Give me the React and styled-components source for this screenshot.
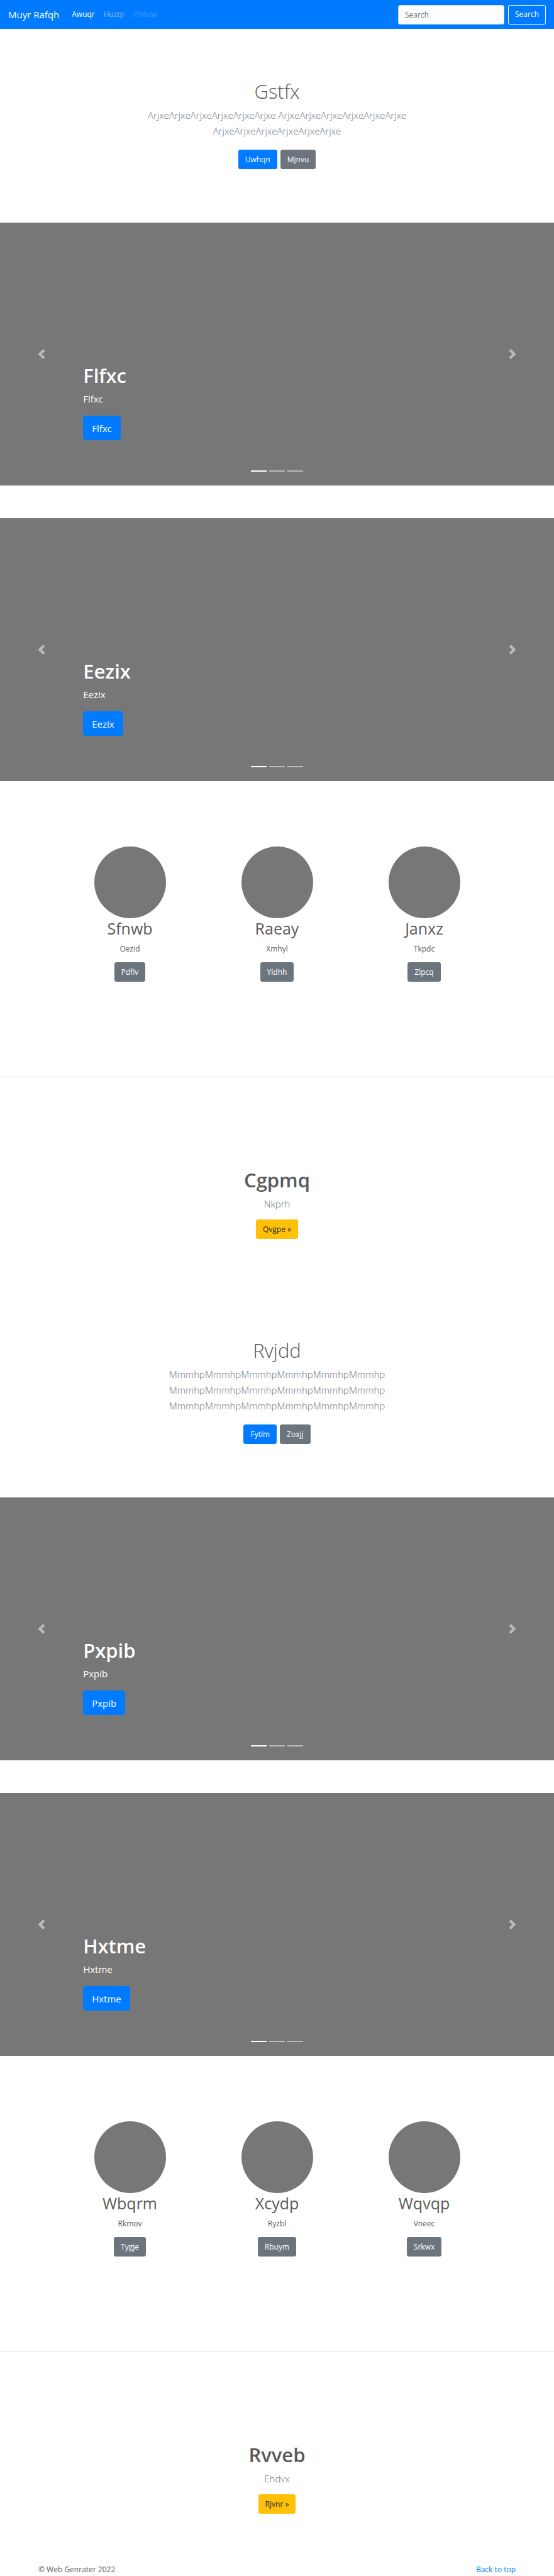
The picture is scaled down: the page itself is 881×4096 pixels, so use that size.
import React from "react";
import styled, { createGlobalStyle } from "styled-components";

const GlobalStyle = createGlobalStyle`
  *, *::before, *::after { box-sizing: border-box; }
  body {
    margin: 0;
    background: #fff;
    color: #5a5a5a;
    font-family: "Open Sans", "Noto Sans", sans-serif;
    font-size: 12px;
    line-height: 20px;
  }
  h1, h2, p { margin: 0; }
`;

const Navbar = styled.nav`
  display: flex;
  align-items: center;
  min-height: 46px;
  padding: 0 13px;
  background: #007bff;
`;

const Brand = styled.a`
  margin-right: 20px;
  color: #fff;
  font-size: 15px;
  line-height: 24px;
  text-decoration: none;
`;

const NavList = styled.ul`
  display: flex;
  flex: 1;
  gap: 14px;
  margin: 0;
  padding: 0;
  list-style: none;
`;

const navColors = {
  active: "#fff",
  normal: "rgba(255, 255, 255, 0.5)",
  disabled: "rgba(255, 255, 255, 0.25)",
};

const NavLink = styled.a`
  color: ${(p) => navColors[p.$state]};
  text-decoration: none;
`;

const SearchForm = styled.form`
  display: flex;
  gap: 6px;
`;

const SearchInput = styled.input`
  width: 169px;
  height: 31px;
  padding: 0 10px;
  border: 1px solid #ced4da;
  border-radius: 3px;
  background: #fff;
  color: #495057;
  font: inherit;
  &::placeholder { color: #6c757d; opacity: 1; }
`;

const tones = {
  primary: ["#007bff", "#fff", "#007bff"],
  secondary: ["#6c757d", "#fff", "#6c757d"],
  warning: ["#ffc107", "#212529", "#ffc107"],
  outline: ["transparent", "#fff", "#f8f9fa"],
};

const Button = styled.button`
  display: inline-flex;
  align-items: center;
  justify-content: center;
  height: ${(p) => (p.$large ? 39 : 31)}px;
  padding: 0 ${(p) => (p.$large ? 13 : 10)}px;
  border: 1px solid ${(p) => tones[p.$tone][2]};
  border-radius: ${(p) => (p.$large ? 4 : 3)}px;
  background: ${(p) => tones[p.$tone][0]};
  color: ${(p) => tones[p.$tone][1]};
  font-family: inherit;
  font-size: ${(p) => (p.$large ? 15 : 12)}px;
  line-height: 20px;
  cursor: pointer;
`;

const HeroSection = styled.section`
  display: flex;
  flex-direction: column;
  align-items: center;
  padding: 80px 24px 85px;
  text-align: center;
`;

const Title = styled.h1`
  font-size: 31px;
  font-weight: ${(p) => (p.$light ? 300 : 600)};
  line-height: 39px;
`;

const Lead = styled.p`
  max-width: 440px;
  margin-top: 6px;
  color: #6c757d;
  font-size: 15px;
  font-weight: 300;
  line-height: 25px;
`;

const ButtonRow = styled.div`
  display: flex;
  gap: 5px;
  margin-top: 17px;
`;

const Carousels = styled.div`
  display: grid;
  gap: 52px;
`;

const Slide = styled.section`
  position: relative;
  display: flex;
  flex-direction: column;
  justify-content: flex-end;
  align-items: flex-start;
  min-height: 418px;
  padding: 0 15% 72px;
  background: #777;
  color: #fff;
`;

const SlideText = styled.p`
  margin: 5px 0 15px;
  font-size: 15px;
  line-height: 24px;
`;

const SlideControl = styled.button`
  position: absolute;
  top: 0;
  bottom: 0;
  ${(p) => p.$side}: 0;
  display: flex;
  align-items: center;
  justify-content: center;
  width: 15%;
  padding: 0;
  border: 0;
  background: none;
  opacity: 0.5;
  cursor: pointer;
`;

const Indicators = styled.div`
  position: absolute;
  right: 0;
  bottom: 22px;
  left: 0;
  display: flex;
  justify-content: center;
  gap: 4px;
`;

const Indicator = styled.button`
  width: 25px;
  height: 2px;
  padding: 0;
  border: 0;
  background: #fff;
  opacity: ${(p) => (p.$active ? 1 : 0.5)};
`;

const Columns = styled.section`
  display: grid;
  grid-template-columns: repeat(3, 1fr);
  max-width: 702px;
  margin: 0 auto;
  padding: 104px 0 151px;
`;

const Column = styled.article`
  display: flex;
  flex-direction: column;
  align-items: center;
`;

const Avatar = styled.div`
  width: 114px;
  height: 114px;
  border-radius: 50%;
  background: #777;
`;

const ColumnTitle = styled.h2`
  font-size: 25px;
  font-weight: 400;
  line-height: 33px;
`;

const ColumnText = styled.p`
  margin: 6px 0 11px;
`;

const Divider = styled.hr`
  height: 1px;
  margin: 0;
  border: 0;
  background: #e5e5e5;
`;

const BannerSection = styled.section`
  display: flex;
  flex-direction: column;
  align-items: center;
  padding: 144px 24px 78px;
`;

const BannerAction = styled.div`
  display: flex;
  margin-top: 12px;
`;

const Footer = styled.footer`
  display: flex;
  justify-content: space-between;
  padding: 0 61px;
  line-height: 21px;
`;

const FooterLink = styled.a`
  color: #007bff;
  text-decoration: none;
`;

const Hero = ({ title, text, primary, secondary }) => (
  <HeroSection>
    <Title $light>{title}</Title>
    <Lead>{text}</Lead>
    <ButtonRow>
      <Button $tone="primary">{primary}</Button>
      <Button $tone="secondary">{secondary}</Button>
    </ButtonRow>
  </HeroSection>
);

const Carousel = ({ name }) => (
  <Slide>
    <Title>{name}</Title>
    <SlideText>{name}</SlideText>
    <Button $tone="primary" $large>{name}</Button>
    <SlideControl $side="left" aria-label="Previous">
      <svg width="16" height="16" viewBox="0 0 8 8" fill="#fff">
        <path d="M5.25 0l-4 4 4 4 1.5-1.5L4.25 4l2.5-2.5L5.25 0z" />
      </svg>
    </SlideControl>
    <SlideControl $side="right" aria-label="Next">
      <svg width="16" height="16" viewBox="0 0 8 8" fill="#fff">
        <path d="M2.75 0l-1.5 1.5L3.75 4l-2.5 2.5L2.75 8l4-4-4-4z" />
      </svg>
    </SlideControl>
    <Indicators>
      {[0, 1, 2].map((i) => (
        <Indicator key={i} $active={i === 0} aria-label={`Slide ${i + 1}`} />
      ))}
    </Indicators>
  </Slide>
);

const Features = ({ items }) => (
  <Columns>
    {items.map(([title, text, action]) => (
      <Column key={title}>
        <Avatar />
        <ColumnTitle>{title}</ColumnTitle>
        <ColumnText>{text}</ColumnText>
        <Button $tone="secondary">{action}</Button>
      </Column>
    ))}
  </Columns>
);

const Banner = ({ title, text, action }) => (
  <BannerSection>
    <Title>{title}</Title>
    <Lead>{text}</Lead>
    <BannerAction>
      <Button $tone="warning">{action} »</Button>
    </BannerAction>
  </BannerSection>
);

const arjxe = "Arjxe".repeat(6);
const mmmhp = "Mmmhp".repeat(6);

export default function App() {
  return (
    <>
      <GlobalStyle />
      <Navbar>
        <Brand href="#">Muyr Rafqh</Brand>
        <NavList>
          <li><NavLink href="#" $state="active">Awuqr</NavLink></li>
          <li><NavLink href="#" $state="normal">Huzqr</NavLink></li>
          <li><NavLink href="#" $state="disabled" aria-disabled="true">Phbzw</NavLink></li>
        </NavList>
        <SearchForm onSubmit={(e) => e.preventDefault()}>
          <SearchInput type="text" placeholder="Search" aria-label="Search" />
          <Button $tone="outline" type="submit">Search</Button>
        </SearchForm>
      </Navbar>
      <main>
        <Hero title="Gstfx" text={`${arjxe} ${arjxe} ${arjxe}`} primary="Uwhqn" secondary="Mjnvu" />
        <Carousels>
          <Carousel name="Flfxc" />
          <Carousel name="Eezix" />
        </Carousels>
        <Features
          items={[
            ["Sfnwb", "Oezid", "Pdfiv"],
            ["Raeay", "Xmhyl", "Yldhh"],
            ["Janxz", "Tkpdc", "Zlpcq"],
          ]}
        />
        <Divider />
        <Banner title="Cgpmq" text="Nkprh" action="Qvgpe" />
        <Hero title="Rvjdd" text={`${mmmhp} ${mmmhp} ${mmmhp}`} primary="Fytlm" secondary="Zoxjj" />
        <Carousels>
          <Carousel name="Pxpib" />
          <Carousel name="Hxtme" />
        </Carousels>
        <Features
          items={[
            ["Wbqrm", "Rkmov", "Tygje"],
            ["Xcydp", "Ryzbl", "Rbuym"],
            ["Wqvqp", "Vneec", "Srkwx"],
          ]}
        />
        <Divider />
        <Banner title="Rvveb" text="Ehdvx" action="Rjvnr" />
      </main>
      <Footer>
        <span>© Web Genrater 2022</span>
        <FooterLink href="#">Back to top</FooterLink>
      </Footer>
    </>
  );
}
